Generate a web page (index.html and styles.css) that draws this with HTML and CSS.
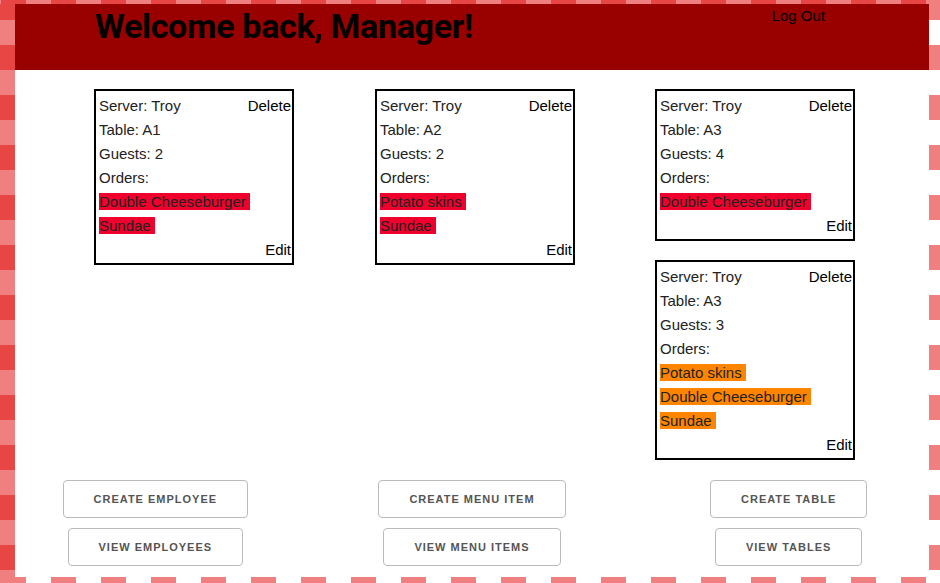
FILE: index.html
```html
<!DOCTYPE html>
<html lang="en">
<head>
<meta charset="utf-8">
<title>Manager Dashboard</title>
<link rel="stylesheet" href="styles.css">
</head>
<body>
<div class="frame">
  <header class="topbar">
    <h1 class="title">Welcome back, Manager!</h1>
    <a class="logout">Log Out</a>
  </header>

  <main class="tables">
    <div class="col">
      <div class="card">
        <span class="action">Delete</span>
        <div>Server: Troy</div>
        <div>Table: A1</div>
        <div>Guests: 2</div>
        <div>Orders:</div>
        <div><span class="item red">Double Cheeseburger&nbsp;</span></div>
        <div><span class="item red">Sundae&nbsp;</span></div>
        <div class="edit-row"><span class="action">Edit</span></div>
      </div>
    </div>
    <div class="col">
      <div class="card">
        <span class="action">Delete</span>
        <div>Server: Troy</div>
        <div>Table: A2</div>
        <div>Guests: 2</div>
        <div>Orders:</div>
        <div><span class="item red">Potato skins&nbsp;</span></div>
        <div><span class="item red">Sundae&nbsp;</span></div>
        <div class="edit-row"><span class="action">Edit</span></div>
      </div>
    </div>
    <div class="col">
      <div class="card">
        <span class="action">Delete</span>
        <div>Server: Troy</div>
        <div>Table: A3</div>
        <div>Guests: 4</div>
        <div>Orders:</div>
        <div><span class="item red">Double Cheeseburger&nbsp;</span></div>
        <div class="edit-row"><span class="action">Edit</span></div>
      </div>
      <div class="card">
        <span class="action">Delete</span>
        <div>Server: Troy</div>
        <div>Table: A3</div>
        <div>Guests: 3</div>
        <div>Orders:</div>
        <div><span class="item orange">Potato skins&nbsp;</span></div>
        <div><span class="item orange">Double Cheeseburger&nbsp;</span></div>
        <div><span class="item orange">Sundae&nbsp;</span></div>
        <div class="edit-row"><span class="action">Edit</span></div>
      </div>
    </div>
  </main>

  <section class="actions">
    <div class="btn-col">
      <button class="btn">Create Employee</button>
      <button class="btn">View Employees</button>
    </div>
    <div class="btn-col">
      <button class="btn">Create Menu Item</button>
      <button class="btn">View Menu Items</button>
    </div>
    <div class="btn-col">
      <button class="btn">Create Table</button>
      <button class="btn">View Tables</button>
    </div>
  </section>
</div>
</body>
</html>
```

FILE: styles.css
```css
html, body {
  margin: 0;
  padding: 0;
  background: #fff;
}

.frame {
  width: 940px;
  height: 583px;
  box-sizing: border-box;
  padding: 4px 11px 6px 15px;
  overflow: hidden;
  font-family: "Liberation Sans", Arial, Helvetica, sans-serif;
  font-size: 15px;
  line-height: 24px;
  color: #222;
  background-color: #fff;
  background-image:
    repeating-linear-gradient(90deg, #f08080 0 1px, #e84545 1px 26px, #f08080 26px 50px),
    repeating-linear-gradient(90deg, transparent 0 1px, #f08080 1px 26px, transparent 26px 50px),
    repeating-linear-gradient(180deg, #e84545 0 20px, #f08080 20px 45px, #e84545 45px 50px),
    repeating-linear-gradient(180deg, #f08080 0 20px, transparent 20px 45px, #f08080 45px 50px);
  background-size: 100% 4px, 100% 6px, 15px 100%, 11px 100%;
  background-position: 0 0, 0 100%, 0 0, 100% 0;
  background-repeat: no-repeat;
}

.topbar {
  height: 66px;
  background: #990000;
  display: flex;
  align-items: flex-start;
}

.title {
  margin: 5px 0 0 80px;
  font-family: Roboto, "Liberation Sans", sans-serif;
  font-weight: 700;
  font-size: 34px;
  line-height: 34px;
  letter-spacing: -0.3px;
  color: #000;
}

.logout {
  margin: 0 104px 0 auto;
  font-size: 15px;
  line-height: 24px;
  color: #000;
  cursor: pointer;
}

.tables {
  display: grid;
  grid-template-columns: 281px 280px 200px;
  padding: 19px 0 0 79px;
}

.col {
  display: flex;
  flex-direction: column;
  gap: 19px;
}

.card {
  width: 200px;
  box-sizing: border-box;
  border: 2px solid #000;
  padding: 3px 1px 1px 3px;
}

.card > .action {
  float: right;
}

.action {
  color: #000;
  cursor: pointer;
}

.edit-row {
  text-align: right;
}

.item.red {
  background: #f0002c;
}

.item.orange {
  background: #ff8400;
}

.actions {
  display: grid;
  grid-template-columns: repeat(3, 1fr);
  width: 950px;
  margin: 20px 0 0 -18px;
}

.btn-col {
  display: flex;
  flex-direction: column;
  align-items: center;
  gap: 10px;
}

.btn {
  height: 38px;
  padding: 0 30px;
  margin: 0;
  box-sizing: border-box;
  border: 1px solid #bbb;
  border-radius: 4px;
  background: #fff;
  color: #555;
  font-family: "Liberation Sans", Arial, Helvetica, sans-serif;
  font-size: 11px;
  font-weight: 700;
  line-height: 36px;
  letter-spacing: 1px;
  text-transform: uppercase;
  white-space: nowrap;
  cursor: pointer;
}
```
